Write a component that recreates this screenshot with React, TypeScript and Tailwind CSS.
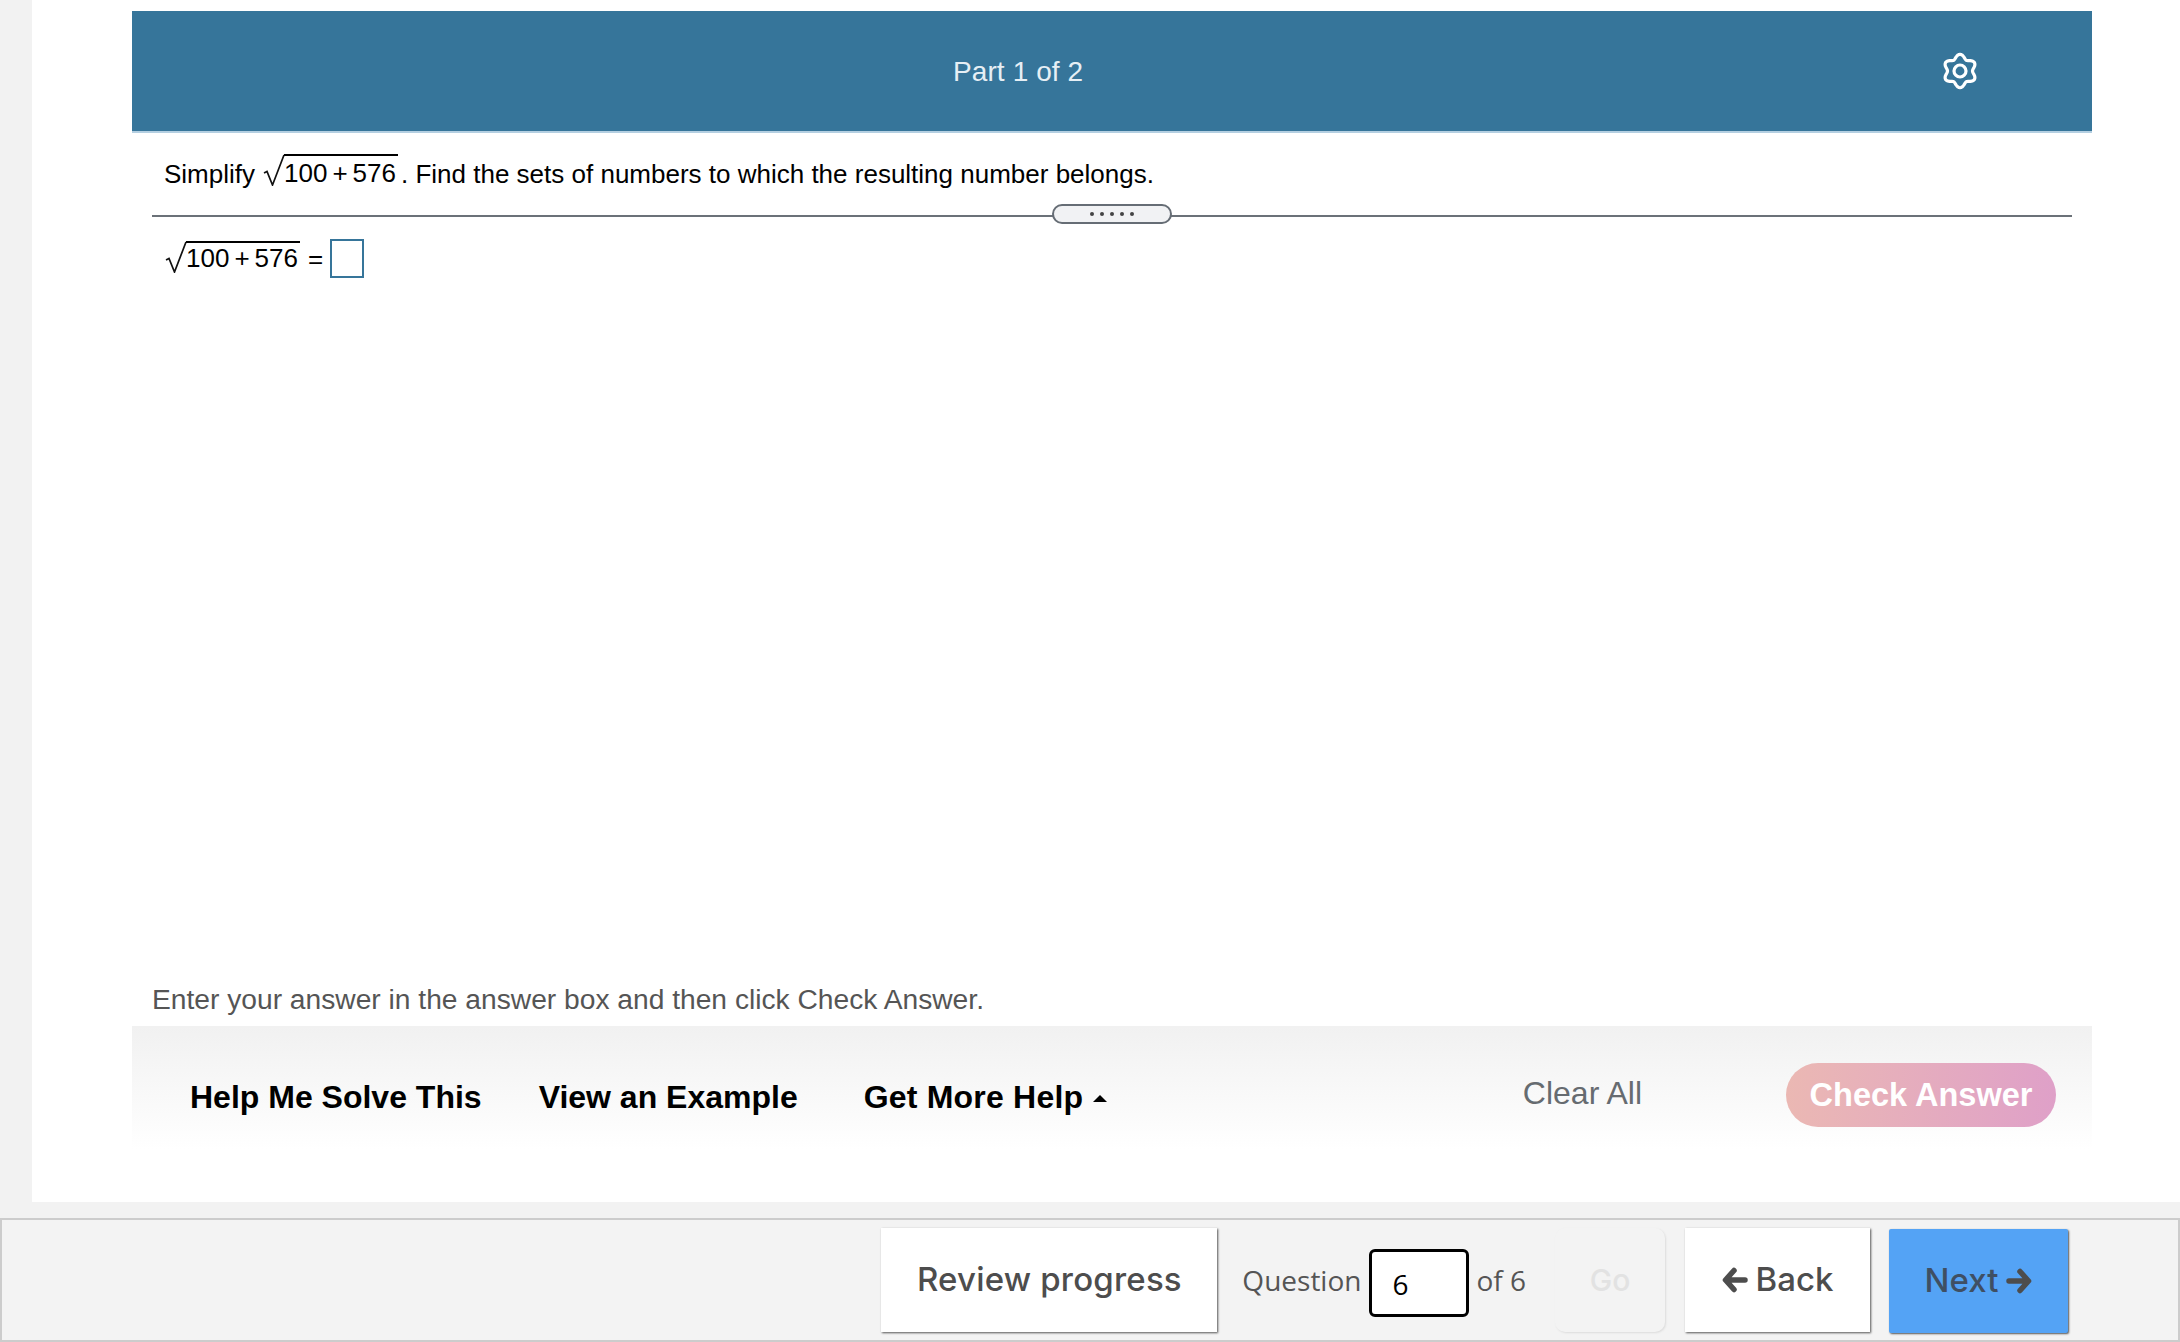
function gearPath() {
	const pts: string[] = []
	for ( let i=0; i<96; i++ ) {
		const t=( i/96 )*Math.PI*2
		const r=14.6+2.1*Math.cos( 6*t )
		pts.push( `${( 20+r*Math.sin( t ) ).toFixed( 2 )} ${( 20-r*Math.cos( t ) ).toFixed( 2 )}` )
	}
	return `M${pts.join( ' L' )} Z`
}

function Gear() {
	return (
		<svg width="40" height="40" viewBox="0 0 40 40" fill="none" stroke="white" strokeWidth="3.2" className="absolute left-[1808px] top-[40px]">
			<path d={gearPath()} strokeLinejoin="round" />
			<circle cx="20" cy="20" r="6" />
		</svg>
	)
}

function ChunkyArrow({ flip }: { flip?: boolean }) {
	return (
		<svg width="26" height="28" viewBox="0 0 26 28" fill="none" stroke="currentColor" strokeWidth="5.5" strokeLinecap="round" strokeLinejoin="round" className={flip ? 'rotate-180' : ''}>
			<path d="M3.5 14 L12 4.5 M3.5 14 L12 23.5 M4 14 H23" />
		</svg>
	)
}

function Radical({ top, lead }: { top: string; lead: string }) {
	return (
		<span className={`inline-flex items-start align-baseline ${top}`}>
			<svg width="22" height="32" viewBox="0 0 22 32" className="shrink-0 -mr-px" fill="none">
				<path d="M1 19 L4 17.5 L9.5 31 L21 1" stroke="#111" strokeWidth="1.7" />
			</svg>
			<span className={`border-t-2 border-black pr-[2px] ${lead}`}>
				100<span className="mx-[5px]">+</span>576
			</span>
		</span>
	)
}

function HelpLink({ label, className }: { label: string; className: string }) {
	return <span className={`text-[32px] font-bold text-black ${className}`}>{label}</span>
}

export default function App() {
	return (
		<div className="h-[1342px] flex flex-col bg-[#f2f2f2] font-['Liberation_Sans',sans-serif] overflow-hidden">
			<main className="ml-[32px] h-[1202px] bg-white pt-[11px] pl-[100px] pr-[88px] flex flex-col shrink-0">
				<div className="h-[122px] bg-[#36759a] border-b-2 border-[#b4cfe1] flex items-center shrink-0 relative">
					<span className="ml-[821px] mt-[2px] text-[28px] text-[#e6eff5] tracking-[0.1px]">Part 1 of 2</span>
					<Gear />
				</div>

				<div className="mx-[20px] flex-1 flex flex-col min-h-0">
					<div className="pl-[12px] pt-[22px] h-[84px] text-[26px] text-black flex items-start shrink-0 border-b-2 border-[#6b7178] relative">
						<span>Simplify</span>
						<Radical top="ml-[8px] mt-[-1px]" lead="leading-[34px]" />
						<span className="ml-[3px]">. Find the sets of numbers to which the resulting number belongs.</span>
						<div className="absolute left-[900px] top-[71px] w-[120px] h-[20px] rounded-full border-2 border-[#666d75] bg-[#f1f2f4] flex items-center justify-center gap-[6px]">
							{[ 0,1,2,3,4 ].map( ( i ) => (
								<span key={i} className="w-[4px] h-[4px] rounded-full bg-[#444]"></span>
							) )}
						</div>
					</div>

					<div className="pl-[13px] pt-[22px] text-[26px] text-black flex items-start shrink-0">
						<Radical top="mt-[2px]" lead="leading-[30px]" />
						<span className="ml-[8px] mt-[1px]">=</span>
						<span className="ml-[7px] w-[34px] h-[39px] border-2 border-[#36759a] bg-white"></span>
					</div>

					<div className="mt-auto mb-[6px] h-[42px] text-[28.2px] text-[#555] leading-[42px]">
						Enter your answer in the answer box and then click Check Answer.
					</div>
				</div>

				<div className="h-[124px] mb-[52px] shrink-0 bg-gradient-to-b from-[#f1f1f1] to-white flex items-center">
					<HelpLink label="Help Me Solve This" className="ml-[58px] mt-[17px]" />
					<HelpLink label="View an Example" className="ml-[57px] mt-[17px]" />
					<HelpLink label="Get More Help" className="ml-[66px] mt-[17px] tracking-[0.2px]" />
					<span className="ml-[10px] mt-[21px] w-0 h-0 border-x-[7px] border-x-transparent border-b-[7px] border-b-black"></span>
					<span className="ml-auto mt-[10px] text-[32px] text-[#666b70]">Clear All</span>
					<button className="ml-[144px] mr-[36px] mt-[14px] w-[270px] h-[64px] rounded-full bg-gradient-to-r from-[#ebb8b3] to-[#dfa0c8] text-white text-[32.5px] font-bold">
						Check Answer
					</button>
				</div>
			</main>

			<footer className="mt-[16px] h-[124px] bg-[#f3f3f3] border-2 border-[#cccccc] flex items-start justify-end pr-[110px] pt-[8px] font-['Open_Sans',sans-serif] text-[#555]">
				<button className="w-[336px] h-[104px] bg-white shadow-[1px_1px_2px_#555] font-['Inter',sans-serif] font-medium text-[#4d4d4d] text-[33px] tracking-[0.2px]">
					Review progress
				</button>
				<span className="ml-[25px] mt-[31px] text-[28px]">Question</span>
				<div className="ml-[8px] mt-[21px] w-[100px] h-[68px] border-[3px] border-black rounded-[6px] bg-white text-black text-[28px] flex items-center pl-[20px] pt-[2px]">
					6
				</div>
				<span className="ml-[7px] mt-[31px] text-[28px]">of 6</span>
				<button className="ml-[29px] w-[110px] h-[104px] rounded-[10px] bg-[#f3f3f3] shadow-[1px_1px_2px_#dcdcdc] text-[#e2e2e2] font-['Inter',sans-serif] font-medium text-[30px]">
					Go
				</button>
				<button className="ml-[20px] w-[185px] h-[104px] bg-white shadow-[1px_1px_2px_#555] font-['Inter',sans-serif] font-medium text-[#4d4d4d] text-[33px] flex items-center justify-center gap-[8px]">
					<ChunkyArrow />
					Back
				</button>
				<button className="ml-[19px] w-[179px] h-[104px] mt-[1px] rounded-[2px] bg-[#54a3f5] shadow-[1px_1px_2px_#555] font-['Inter',sans-serif] font-medium text-[#3f4f63] text-[33px] flex items-center justify-center gap-[8px]">
					Next
					<span className="text-[#4d4d4d]"><ChunkyArrow flip /></span>
				</button>
			</footer>
		</div>
	)
}
